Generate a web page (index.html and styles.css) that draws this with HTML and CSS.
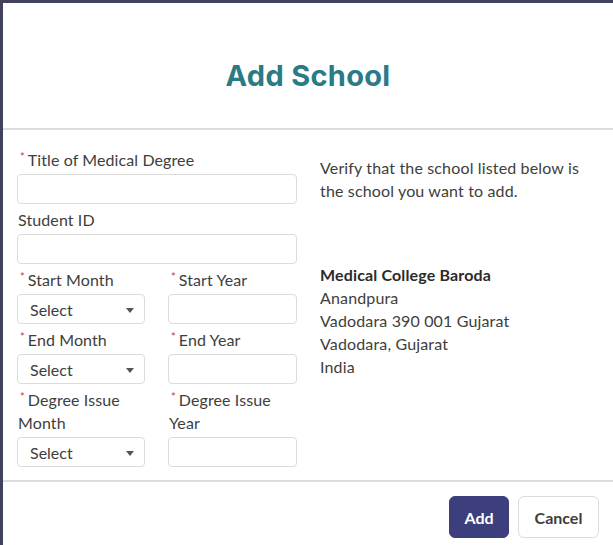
FILE: index.html
```html
<!DOCTYPE html>
<html>
<head>
<meta charset="utf-8">
<link rel="stylesheet" href="styles.css">
</head>
<body>
<div class="modal">
  <header class="modal-header">
    <h1 class="title">Add School</h1>
  </header>
  <section class="modal-body">
    <div class="form">
      <div class="field">
        <label class="label"><span class="req">*</span>Title of Medical Degree</label>
        <div class="input"></div>
      </div>
      <div class="field">
        <label class="label">Student ID</label>
        <div class="input"></div>
      </div>
      <div class="pair">
        <div class="field">
          <label class="label"><span class="req">*</span>Start Month</label>
          <div class="input select"><span>Select</span><span class="caret"></span></div>
        </div>
        <div class="field">
          <label class="label"><span class="req">*</span>Start Year</label>
          <div class="input"></div>
        </div>
      </div>
      <div class="pair">
        <div class="field">
          <label class="label"><span class="req">*</span>End Month</label>
          <div class="input select"><span>Select</span><span class="caret"></span></div>
        </div>
        <div class="field">
          <label class="label"><span class="req">*</span>End Year</label>
          <div class="input"></div>
        </div>
      </div>
      <div class="pair">
        <div class="field">
          <label class="label"><span class="req">*</span>Degree Issue<br>Month</label>
          <div class="input select"><span>Select</span><span class="caret"></span></div>
        </div>
        <div class="field">
          <label class="label"><span class="req">*</span>Degree Issue<br>Year</label>
          <div class="input"></div>
        </div>
      </div>
    </div>
    <div class="info">
      <p class="verify">Verify that the school listed below is the school you want to add.</p>
      <div class="address">
        <div class="school">Medical College Baroda</div>
        <div>Anandpura</div>
        <div>Vadodara 390 001 Gujarat</div>
        <div>Vadodara, Gujarat</div>
        <div>India</div>
      </div>
    </div>
  </section>
  <footer class="modal-footer">
    <button class="btn btn-primary">Add</button>
    <button class="btn btn-neutral">Cancel</button>
  </footer>
</div>
</body>
</html>
```
FILE: styles.css
```css
html, body {
  margin: 0;
  padding: 0;
  background: #ffffff;
}
body {
  font-family: Lato, "Open Sans", Arial, sans-serif;
  color: #3e3e3c;
  font-size: 16px;
  width: 613px;
  height: 545px;
  overflow: hidden;
}
.modal {
  box-sizing: border-box;
  width: 613px;
  height: 545px;
  border-top: 3px solid #41425f;
  border-left: 3px solid #41425f;
  display: flex;
  flex-direction: column;
}
.modal-header {
  height: 127px;
  border-bottom: 2px solid #dcdcdc;
  display: flex;
  align-items: center;
  justify-content: center;
  box-sizing: border-box;
}
.title {
  margin: 0;
  font-family: Inter, "Open Sans", sans-serif;
  font-weight: 700;
  font-size: 29px;
  color: #2a7b86;
  letter-spacing: 0.3px;
  padding-top: 20px;
}
.modal-body {
  display: flex;
  padding: 18px 14px 13px 14px;
  gap: 23px;
  border-bottom: 2px solid #dcdcdc;
}
.form {
  width: 280px;
  flex-shrink: 0;
  display: flex;
  flex-direction: column;
  gap: 4px;
}
.field {
  display: flex;
  flex-direction: column;
}
.label {
  line-height: 23px;
  margin-bottom: 3px;
  padding-left: 1px;
  letter-spacing: 0.1px;
}
.req {
  color: #c23934;
  font-size: 11px;
  vertical-align: top;
  position: relative;
  top: -3px;
  margin-left: 2px;
  margin-right: 3px;
}
.input {
  box-sizing: border-box;
  height: 30px;
  border: 1px solid #dddbda;
  border-radius: 4px;
  background: #fff;
}
.pair {
  display: grid;
  grid-template-columns: 128px 129px;
  column-gap: 23px;
  align-items: end;
}
.select {
  display: flex;
  align-items: center;
  justify-content: space-between;
  padding: 0 10px 0 12px;
  color: #3e3e3c;
}
.caret {
  width: 0;
  height: 0;
  border-left: 4px solid transparent;
  border-right: 4px solid transparent;
  border-top: 5px solid #555;
  margin-top: 3px;
}
.info {
  flex: 1;
  padding-top: 8px;
  line-height: 23px;
  letter-spacing: 0.15px;
}
.verify {
  margin: 0;
}
.address {
  margin-top: 61px;
}
.school {
  font-weight: 700;
  color: #2b2b2b;
}
.modal-footer {
  display: flex;
  justify-content: flex-end;
  gap: 9px;
  padding: 14px 14px 0 0;
}
.btn {
  height: 42px;
  border-radius: 6px;
  font-family: Lato, "Open Sans", sans-serif;
  font-size: 16px;
  font-weight: 700;
  cursor: pointer;
}
.btn-primary {
  width: 60px;
  background: #3c3f7c;
  border: 1px solid #3c3f7c;
  color: #fff;
}
.btn-neutral {
  width: 81px;
  background: #fff;
  border: 1px solid #dddbda;
  color: #3e3e3c;
}
```
